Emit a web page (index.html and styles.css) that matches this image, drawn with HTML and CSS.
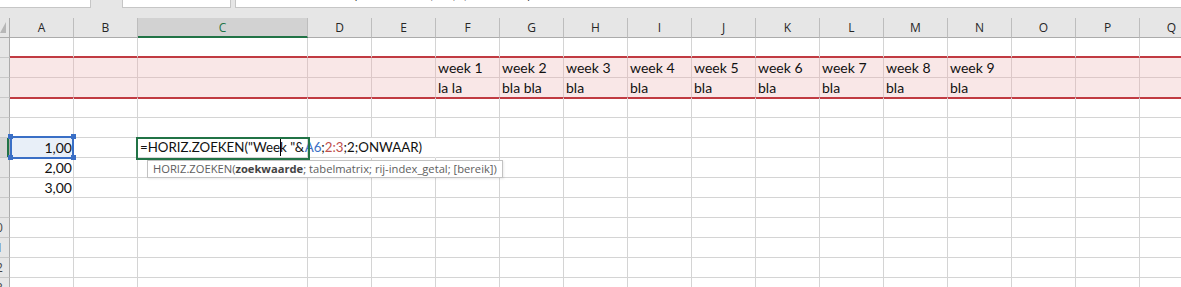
FILE: index.html
```html
<!DOCTYPE html>
<html lang="nl">
<head>
    <meta charset="UTF-8">
    <title>Blad1 - Excel</title>
    <link rel="stylesheet" href="styles.css">
</head>
<body>
<div class="formula-bar">
    <div class="fb-box name-box"></div>
    <div class="fb-box fn-box"></div>
    <div class="fb-box formula-input"><span>=HORIZ.ZOEKEN("Week "&amp;A6;2:3;2;ONWAAR)</span></div>
</div>

<div class="sheet">
    <div class="row hdr">
        <div class="corner">
            <svg width="9" height="19" viewBox="0 0 9 19"><polygon points="6,4 6,15 0,15" fill="#b7b7b7"/></svg>
        </div>
        <div>A</div><div>B</div><div class="sel">C</div><div>D</div><div>E</div><div>F</div><div>G</div><div>H</div><div>I</div><div>J</div><div>K</div><div>L</div><div>M</div><div>N</div><div>O</div><div>P</div><div>Q</div>
    </div>

    <div class="row band-above">
        <div class="rh"><span>1</span></div>
        <div></div><div></div><div></div><div></div><div></div><div></div><div></div><div></div><div></div><div></div><div></div><div></div><div></div><div></div><div></div><div></div><div></div>
    </div>
    <div class="row band band-first">
        <div class="rh"><span>2</span></div>
        <div></div><div></div><div></div><div></div><div></div>
        <div>week 1</div><div>week 2</div><div>week 3</div><div>week 4</div><div>week 5</div><div>week 6</div><div>week 7</div><div>week 8</div><div>week 9</div>
        <div></div><div></div><div></div>
    </div>
    <div class="row band band-last">
        <div class="rh"><span>3</span></div>
        <div></div><div></div><div></div><div></div><div></div>
        <div>la la</div><div>bla bla</div><div>bla</div><div>bla</div><div>bla</div><div>bla</div><div>bla</div><div>bla</div><div>bla</div>
        <div></div><div></div><div></div>
    </div>
    <div class="row band-below">
        <div class="rh"><span>4</span></div>
        <div></div><div></div><div></div><div></div><div></div><div></div><div></div><div></div><div></div><div></div><div></div><div></div><div></div><div></div><div></div><div></div><div></div>
    </div>
    <div class="row">
        <div class="rh"><span>5</span></div>
        <div></div><div></div><div></div><div></div><div></div><div></div><div></div><div></div><div></div><div></div><div></div><div></div><div></div><div></div><div></div><div></div><div></div>
    </div>
    <div class="row">
        <div class="rh active"><span>6</span></div>
        <div class="num ref">1,00<i class="h tl"></i><i class="h tr"></i><i class="h bl"></i><i class="h br"></i></div>
        <div></div>
        <div class="edit">=HORIZ.ZOEKEN("Wee<b class="caret"></b>k "&amp;<span class="ref-a">A6</span>;<span class="ref-b">2:3</span>;2;ONWAAR)
            <div class="tip">HORIZ.ZOEKEN(<b>zoekwaarde</b>; tabelmatrix; rij-index_getal; [bereik])</div>
        </div>
        <div class="spill"></div><div class="spill"></div>
        <div></div><div></div><div></div><div></div><div></div><div></div><div></div><div></div><div></div><div></div><div></div><div></div>
    </div>
    <div class="row">
        <div class="rh"><span>7</span></div>
        <div class="num">2,00</div>
        <div></div><div></div><div></div><div></div><div></div><div></div><div></div><div></div><div></div><div></div><div></div><div></div><div></div><div></div><div></div><div></div>
    </div>
    <div class="row">
        <div class="rh"><span>8</span></div>
        <div class="num">3,00</div>
        <div></div><div></div><div></div><div></div><div></div><div></div><div></div><div></div><div></div><div></div><div></div><div></div><div></div><div></div><div></div><div></div>
    </div>
    <div class="row">
        <div class="rh"><span>9</span></div>
        <div></div><div></div><div></div><div></div><div></div><div></div><div></div><div></div><div></div><div></div><div></div><div></div><div></div><div></div><div></div><div></div><div></div>
    </div>
    <div class="row">
        <div class="rh"><span>10</span></div>
        <div></div><div></div><div></div><div></div><div></div><div></div><div></div><div></div><div></div><div></div><div></div><div></div><div></div><div></div><div></div><div></div><div></div>
    </div>
    <div class="row">
        <div class="rh"><span>11</span></div>
        <div></div><div></div><div></div><div></div><div></div><div></div><div></div><div></div><div></div><div></div><div></div><div></div><div></div><div></div><div></div><div></div><div></div>
    </div>
    <div class="row">
        <div class="rh"><span>12</span></div>
        <div></div><div></div><div></div><div></div><div></div><div></div><div></div><div></div><div></div><div></div><div></div><div></div><div></div><div></div><div></div><div></div><div></div>
    </div>
    <div class="row">
        <div class="rh"><span>13</span></div>
        <div></div><div></div><div></div><div></div><div></div><div></div><div></div><div></div><div></div><div></div><div></div><div></div><div></div><div></div><div></div><div></div><div></div>
    </div>
</div>
</body>
</html>
```

FILE: styles.css
```css
body {
    margin: 0;
    width: 1181px;
    height: 287px;
    overflow: hidden;
    background: #fff;
    font-family: Lato, 'Liberation Sans', sans-serif;
    color: #111;
}
.formula-bar {
    display: flex;
    height: 18px;
    background: #e6e6e6;
}
.fb-box {
    height: 8px;
    background: #fff;
    border-bottom: 1px solid #c6c6c6;
    box-sizing: border-box;
    overflow: hidden;
}
.name-box {
    width: 91px;
    border-right: 1px solid #c6c6c6;
}
.fn-box {
    width: 109px;
    margin-left: 31px;
    border-left: 1px solid #c6c6c6;
    border-right: 1px solid #c6c6c6;
}
.formula-input {
    flex: 1;
    margin-left: 4px;
    padding-left: 13px;
    border-left: 1px solid #c6c6c6;
}
.formula-input span {
    display: block;
    font-size: 13.3px;
    line-height: 14px;
    margin-top: -13px;
    white-space: nowrap;
}
.sheet {
    width: 1204px;
}
.row {
    display: grid;
    grid-template-columns: 10px 64px 64px 170px 64px 64px repeat(12, 64px);
    height: 20px;
}
.row > div {
    box-sizing: border-box;
    border-right: 1px solid #d4d4d4;
    border-bottom: 1px solid #d4d4d4;
    padding: 0 2px;
    font-size: 14px;
    line-height: 19px;
    white-space: nowrap;
    overflow: hidden;
}
.hdr > div {
    background: #e6e6e6;
    border-right-color: #bdbdbd;
    border-bottom-color: #ababab;
    font-family: 'Open Sans', 'Noto Sans', sans-serif;
    font-size: 12px;
    color: #262626;
    text-align: center;
    padding: 0;
}
.hdr > .corner {
    border-right-color: #ababab;
}
.corner svg {
    display: block;
}
.hdr > .sel {
    background: #d2d2d2;
    border-bottom: 2px solid #217346;
    color: #217346;
}
.row > .rh {
    background: #e6e6e6;
    border-right-color: #ababab;
    border-bottom-color: #c8c8c8;
    padding: 0;
    font-family: 'Open Sans', 'Noto Sans', sans-serif;
    font-size: 12px;
    color: #444;
}
.rh span {
    display: block;
    width: 30px;
    margin-left: -19px;
    text-align: center;
}
.row > .rh.active {
    background: #d6d6d6;
    box-shadow: inset -2px 0 0 #217346;
}

/* red framed band, rows 2-3 */
.band-above > div:not(.rh) {
    border-bottom-color: #c13b42;
    box-shadow: inset 0 -1px 0 #c13b42;
}
.band > div:not(.rh) {
    background: #f9e7e7;
    border-right-color: #dcc8c8;
}
.band-first > div:not(.rh) {
    border-bottom-color: #dcc8c8;
}
.band-last > div:not(.rh) {
    border-bottom-color: #c13b42;
}
.band-below > div:not(.rh) {
    box-shadow: inset 0 1px 0 #c13b42;
}

.row > .num {
    text-align: right;
    padding-right: 1px;
}
.row > .ref {
    position: relative;
    overflow: visible;
    background: #e8eff8;
}
.ref::after {
    content: '';
    position: absolute;
    left: 0;
    top: -2px;
    width: 64px;
    height: 23px;
    border: 2px solid #3a6fc6;
    box-sizing: border-box;
}
.h {
    position: absolute;
    width: 5px;
    height: 5px;
    background: #3a6fc6;
    z-index: 1;
}
.h.tl { left: -2px; top: -4px; }
.h.tr { left: 61px; top: -4px; }
.h.bl { left: -2px; top: 17px; }
.h.br { left: 61px; top: 17px; }

.row > .edit {
    position: relative;
    overflow: visible;
    z-index: 2;
    font-size: 13.3px;
}
.edit::after {
    content: '';
    position: absolute;
    left: -2px;
    top: -1px;
    width: 174px;
    height: 23px;
    border: 2px solid #217346;
    box-sizing: border-box;
}
.caret {
    display: inline-block;
    width: 0;
    height: 18px;
    border-left: 1px solid #000;
    margin-right: -1px;
    vertical-align: -4px;
}
.ref-a {
    color: #3a6fc6;
}
.ref-b {
    color: #c0504d;
}
.row > .spill {
    border-right-color: transparent;
}
.tip {
    position: absolute;
    left: 9px;
    top: 22px;
    width: 356px;
    height: 18px;
    box-sizing: border-box;
    padding-left: 5px;
    background: #fff;
    border: 1px solid #c2c2c2;
    box-shadow: 1px 1px 2px rgba(0, 0, 0, 0.08);
    font-family: 'Open Sans', 'Noto Sans', sans-serif;
    font-size: 11.2px;
    line-height: 16px;
    color: #5e5e5e;
}
.tip b {
    font-weight: 700;
    color: #444;
}
```
